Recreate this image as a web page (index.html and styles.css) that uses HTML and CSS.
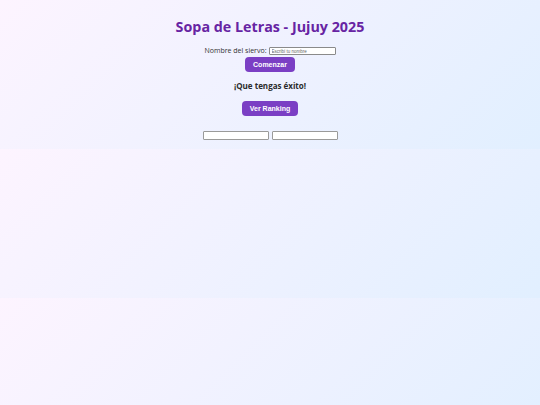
FILE: index.html
```html
<!DOCTYPE html>
<html lang="es">
<head>
<meta charset="utf-8">
<title>Sopa de Letras - Jujuy 2025</title>
<link rel="stylesheet" href="styles.css">
</head>
<body>
<main class="app">
  <h1 class="title">Sopa de Letras - Jujuy 2025</h1>
  <div class="login">
    <div class="name-row">
      <label class="label" for="nombre">Nombre del siervo:</label>
      <input class="name-input" id="nombre" type="text" placeholder="Escribí tu nombre">
    </div>
    <button class="btn btn-start">Comenzar</button>
  </div>
  <h2 class="greeting">¡Que tengas éxito!</h2>
  <button class="btn btn-ranking">Ver Ranking</button>
  <div class="boxes">
    <div class="box"></div>
    <div class="box"></div>
  </div>
</main>
</body>
</html>
```

FILE: styles.css
```css
body {
  margin: 0;
  font-family: "Open Sans", "Liberation Sans", sans-serif;
  background: linear-gradient(135deg, #fdf4ff, #e1efff);
}

.app {
  display: flex;
  flex-direction: column;
  align-items: center;
  padding: 17px 0 9px;
}

.title {
  margin: 0;
  font-size: 14.3px;
  line-height: 20px;
  font-weight: 700;
  color: #6724a3;
}

.login {
  display: flex;
  flex-direction: column;
  align-items: center;
  margin-top: 9px;
}

.name-row {
  display: flex;
  align-items: center;
  gap: 2px;
  height: 10px;
}

.label {
  font-size: 7px;
  line-height: 10px;
  color: #333;
}

.name-input {
  box-sizing: border-box;
  width: 67px;
  height: 8px;
  padding: 0 2px;
  margin: 0;
  border: 1px solid #8a8a8a;
  border-radius: 1px;
  background: #fff;
  font-size: 4.5px;
  font-family: "Liberation Sans", sans-serif;
}

.name-input::placeholder {
  color: #666;
}

.btn {
  border: none;
  border-radius: 4px;
  background: #7b3fc4;
  color: #fff;
  font-family: "Liberation Sans", Arial, sans-serif;
  font-weight: 700;
  font-size: 7px;
  line-height: 15px;
  height: 15px;
  padding: 0;
  white-space: nowrap;
  cursor: pointer;
}

.btn-start {
  width: 50px;
  margin-top: 1px;
}

.greeting {
  margin: 8px 0 0;
  font-size: 8px;
  line-height: 12px;
  font-weight: 700;
  color: #2b2b2b;
}

.btn-ranking {
  width: 56px;
  margin-top: 9px;
}

.boxes {
  display: flex;
  justify-content: center;
  gap: 3px;
  margin-top: 15px;
}

.box {
  box-sizing: border-box;
  width: 66px;
  height: 9px;
  background: #fff;
  border: 1px solid #9a9a9a;
  border-radius: 1px;
}
```
